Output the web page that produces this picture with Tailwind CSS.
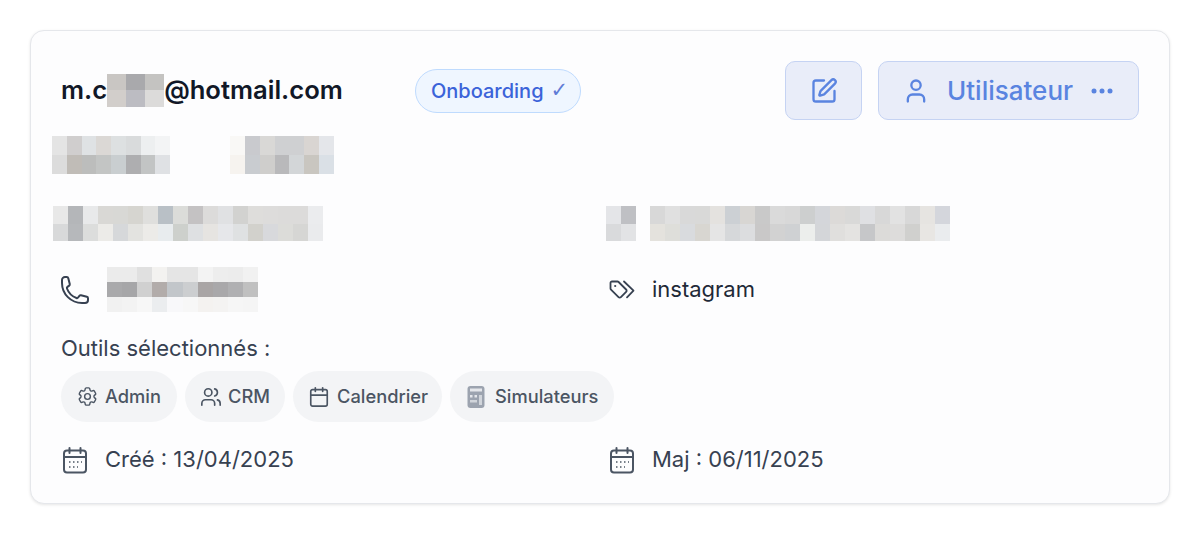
<!DOCTYPE html>
<html lang="en">
<head>
  <meta charset="UTF-8">
  <title>Fiche utilisateur</title>
  <meta name="viewport" content="width=device-width, initial-scale=1.0">
  <script src="https://cdn.jsdelivr.net/npm/@tailwindcss/browser@4"></script>
</head>
<body class="bg-white font-['Inter',sans-serif] p-[30px]">

  <div class="bg-[#fdfdfe] border border-[#e5e7eb] rounded-[14px] shadow-[0_1px_3px_rgba(0,0,0,0.1)] h-[474px] pt-[30px] px-[30px]">

    <!-- Header: email, status and actions -->
    <div class="flex items-center h-[59px]">
      <div class="flex items-center w-[354px] text-[25.6px] font-semibold text-[#111827]">
        <span>m.c</span>
        <div class="mosaic w-[57px] h-[33px]" data-cols="3" data-colors="c9c6c3 a9a9ac c4c3c1 d2cecb bcbcc2 dcdbda"></div>
        <span>@hotmail.com</span>
      </div>
      <span class="flex items-center gap-[7px] w-[166px] h-[44px] pl-[15px] rounded-full border border-[#bfdbfe] bg-[#eff6ff] text-[#3b63d9] text-[20px] font-medium">Onboarding <span class="font-['DejaVu_Sans',sans-serif] font-normal text-[#5f7cd6] text-[21px]">✓</span></span>
      <div class="ml-auto flex gap-4">
        <button class="flex items-center justify-center w-[77px] h-[59px] rounded-[10px] border border-[#c5d3f3] bg-[#e9edf9] text-[#5a84e0]">
          <svg class="w-[28px] h-[28px]" viewBox="0 0 24 24" fill="none" stroke="currentColor" stroke-width="2" stroke-linecap="round" stroke-linejoin="round"><path d="M12 3H5a2 2 0 0 0-2 2v14a2 2 0 0 0 2 2h14a2 2 0 0 0 2-2v-7"/><path d="M18.375 2.625a1 1 0 0 1 3 3l-9.013 9.014a2 2 0 0 1-.853.505l-2.873.84a.5.5 0 0 1-.62-.62l.84-2.873a2 2 0 0 1 .506-.852z"/></svg>
        </button>
        <button class="flex items-center w-[261px] h-[59px] pl-[23px] rounded-[10px] border border-[#c5d3f3] bg-[#e9edf9] text-[#5a84e0] text-[26px] font-medium">
          <svg class="w-[28px] h-[28px]" viewBox="0 0 24 24" fill="none" stroke="currentColor" stroke-width="2" stroke-linecap="round" stroke-linejoin="round"><path d="M19 21v-2a4 4 0 0 0-4-4H9a4 4 0 0 0-4 4v2"/><circle cx="12" cy="7" r="4"/></svg>
          <span class="ml-[17px]">Utilisateur</span>
          <svg class="w-[24px] h-[24px] ml-[17px]" viewBox="0 0 24 24" fill="currentColor"><circle cx="4" cy="12" r="2.500"/><circle cx="12" cy="12" r="2.500"/><circle cx="20" cy="12" r="2.500"/></svg>
        </button>
      </div>
    </div>

    <!-- Name -->
    <div class="flex mt-4 -ml-[9px]">
      <div class="mosaic w-[118px] h-[38px]" data-cols="8" data-colors="e4e4e4 d0cece dfe2e4 dbd8d5 dde0e1 d9dbdc edeff0 f3f4f5 dcdcdc c0bcb7 bcbdbc c3c5c4 c9ced0 aeaeb0 c2c4c4 dfe1e4"></div>
      <div class="mosaic w-[104px] h-[38px] ml-[60px]" data-cols="7" data-colors="f9f8f6 c9cace d9d8d6 cfd0d2 cfd0d2 d9d5d2 e4e6ea f6f3ef c9ccd0 cfcecc b9b9bb d3d6d8 c9c6c0 dae0e6"></div>
    </div>

    <!-- Contact details -->
    <div class="grid grid-cols-2 gap-x-4 mt-8">
      <div class="mosaic w-[270px] h-[35px] -ml-[8px]" data-cols="18" data-colors="e8e8e8 b4b6b9 e8e9ea d9d8d5 d8d8d5 d6d5d0 dfdfdd b9c0c6 dbdcd9 c4c2c3 dcdbda e0e1e3 d2d2d0 dedddb dddcdb dcdbda dcdbda ebecee d8d9da b6b8bb dcdddc ecebe8 d6d8da e3e3e0 ecebe8 e8ecee cdd0cc dee0e2 e6e4e1 e6e7ea dfe1e2 d2d1cc d8d9dc dcdcd9 d6d6d4 eaebed"></div>
      <div class="flex -ml-[2px]">
        <div class="mosaic w-[30px] h-[35px]" data-cols="2" data-colors="e4e5e8 bfc0c4 d9dadc e2e3e5"></div>
        <div class="mosaic w-[300px] h-[35px] ml-[14px]" data-cols="20" data-colors="d8d8d8 e0e0e0 d9d9d9 d9d9d8 e4e2df ccd0d4 d8d6d3 c9c9c9 dadada d8d8d8 cdcfcf d4d6da dcdad8 d9d9d8 dfe0e3 d8d8d8 e2e2e2 d8d8d8 e6e4e1 d4d6dc e4e2dd dededa d9dbde d8d6d1 e5e5e5 d6d8da dcdddf c9c8c8 d2d2d2 cfd1d3 eceeec d4d6d9 e0dfdd e4e3e1 c6c7c9 dcdbd9 dddcdb d0d0ce e8e6e3 eaecee"></div>
      </div>
    </div>

    <div class="grid grid-cols-2 gap-x-4 mt-[26px] h-[45px] text-[#1f2937] text-[22px]">
      <div class="flex items-center gap-4">
        <svg class="w-[28px] h-[28px] shrink-0" viewBox="1.500 1.500 21 21" fill="none" stroke="#374151" stroke-width="1.500" stroke-linecap="round" stroke-linejoin="round"><path d="M2.250 6.750c0 8.284 6.716 15 15 15h2.250a2.250 2.250 0 0 0 2.250-2.250v-1.372c0-.516-.351-.966-.852-1.091l-4.423-1.106c-.44-.11-.902.055-1.173.417l-.97 1.293c-.282.376-.769.542-1.21.38a12.035 12.035 0 0 1-7.143-7.143c-.162-.441.004-.928.38-1.21l1.293-.97c.363-.271.527-.734.417-1.173L6.963 3.102a1.125 1.125 0 0 0-1.091-.852H4.500A2.250 2.250 0 0 0 2.250 4.500v2.250Z"/></svg>
        <div class="mosaic w-[151px] h-[45px] ml-[2px]" data-cols="10" data-colors="ebebeb ebebeb e0e0e0 f3f2f0 e5e5e5 e5e5e5 f3f3f3 ededed ececec f1f1f1 a9a9ab a6a6a8 d0d0d0 b2acaa c2c6ca ccced0 a9a5a5 a9a8aa b0b0b2 c0c0c0 f1f1f1 f3f3f3 f7f7f7 ebedef f8f8fa f7f7f7 f4f2f0 f4f3f2 f6f6f6 f5f5f5"></div>
      </div>
      <div class="flex items-center gap-4">
        <svg class="w-[28px] h-[28px] shrink-0" viewBox="0 0 28 28" fill="none" stroke="#374151" stroke-width="1.800" stroke-linecap="round" stroke-linejoin="round"><path d="M2.500 7v5.500c0 .4.2.8.5 1.100l7.500 7.500c.7.7 1.700.7 2.400 0l5.200-5.200c.7-.7.7-1.700 0-2.400L10.600 6c-.3-.3-.7-.5-1.100-.5H4c-.8 0-1.500.7-1.500 1.500Z"/><path d="M16 5.500l9.500 9.200-6.500 6.600"/><circle cx="7.200" cy="10" r="1.100" fill="#374151" stroke="none"/></svg>
        <span>instagram</span>
      </div>
    </div>

    <!-- Selected tools -->
    <p class="mt-[22px] text-[22px] leading-[28px] text-[#374151]">Outils sélectionnés :</p>
    <div class="flex gap-2 mt-[9px] text-[18.300px] font-medium text-[#4b5563]">
      <span class="flex items-center gap-[6px] h-[51px] w-[116px] pl-[15px] rounded-full bg-[#f3f4f6]">
        <svg class="w-[23px] h-[23px]" viewBox="0 0 24 24" fill="none" stroke="currentColor" stroke-width="1.500" stroke-linecap="round" stroke-linejoin="round"><path d="M9.594 3.94c.09-.542.56-.94 1.11-.94h2.593c.55 0 1.02.398 1.11.94l.213 1.281c.063.374.313.686.645.87.074.04.147.083.22.127.325.196.72.257 1.075.124l1.217-.456a1.125 1.125 0 0 1 1.37.49l1.296 2.247a1.125 1.125 0 0 1-.26 1.431l-1.003.827c-.293.241-.438.613-.43.992a7.723 7.723 0 0 1 0 .255c-.008.378.137.75.43.991l1.004.827c.424.35.534.955.26 1.43l-1.298 2.247a1.125 1.125 0 0 1-1.369.491l-1.217-.456c-.355-.133-.75-.072-1.076.124a6.47 6.47 0 0 1-.22.128c-.331.183-.581.495-.644.869l-.213 1.281c-.09.543-.56.94-1.11.94h-2.594c-.55 0-1.019-.398-1.11-.94l-.213-1.281c-.062-.374-.312-.686-.644-.87a6.52 6.52 0 0 1-.22-.127c-.325-.196-.72-.257-1.076-.124l-1.217.456a1.125 1.125 0 0 1-1.369-.49l-1.297-2.247a1.125 1.125 0 0 1 .26-1.431l1.004-.827c.292-.24.437-.613.43-.991a6.932 6.932 0 0 1 0-.255c.007-.38-.138-.751-.43-.992l-1.004-.827a1.125 1.125 0 0 1-.26-1.43l1.297-2.247a1.125 1.125 0 0 1 1.37-.491l1.216.456c.356.133.751.072 1.076-.124.072-.044.146-.086.22-.128.332-.183.582-.495.644-.869l.214-1.28Z"/><circle cx="12" cy="12" r="3"/></svg>
        Admin
      </span>
      <span class="flex items-center gap-[6px] h-[51px] w-[100px] pl-[15px] rounded-full bg-[#f3f4f6]">
        <svg class="w-[22px] h-[22px]" viewBox="0 0 24 24" fill="none" stroke="currentColor" stroke-width="1.800" stroke-linecap="round" stroke-linejoin="round"><path d="M16 21v-2a4 4 0 0 0-4-4H6a4 4 0 0 0-4 4v2"/><path d="M16 3.128a4 4 0 0 1 0 7.744"/><path d="M22 21v-2a4 4 0 0 0-3-3.870"/><circle cx="9" cy="7" r="4"/></svg>
        CRM
      </span>
      <span class="flex items-center gap-[7px] h-[51px] w-[149px] pl-[15px] rounded-full bg-[#f3f4f6]">
        <svg class="w-[22px] h-[22px]" viewBox="0 0 24 24" fill="none" stroke="currentColor" stroke-width="1.800" stroke-linecap="round" stroke-linejoin="round"><path d="M8 2v4"/><path d="M16 2v4"/><rect x="3" y="4" width="18" height="18" rx="2"/><path d="M3 10h18"/></svg>
        Calendrier
      </span>
      <span class="flex items-center gap-[8px] h-[51px] w-[164px] pl-[15px] rounded-full bg-[#f3f4f6]">
        <svg class="w-[22px] h-[22px]" viewBox="0 0 22 22"><rect x="2.500" y="0" width="17" height="22" rx="3" fill="#9ca3af"/><rect x="5" y="2.500" width="12" height="3" fill="#e5e7eb"/><rect x="5" y="9" width="2.500" height="2.500" fill="#e5e7eb"/><rect x="9.500" y="9" width="2.500" height="2.500" fill="#e5e7eb"/><rect x="14" y="9" width="3" height="10" fill="#d1d5db"/><rect x="5" y="14" width="7" height="2.500" fill="#d1d5db"/></svg>
        Simulateurs
      </span>
    </div>

    <!-- Dates -->
    <div class="grid grid-cols-2 gap-x-4 mt-[21px] text-[22px] text-[#374151]">
      <div class="flex items-center gap-4">
        <svg class="w-[28px] h-[28px]" viewBox="0 0 28 28" fill="none" stroke="#4b5563" stroke-width="2" stroke-linecap="round" stroke-linejoin="round"><path d="M8.500 2v5M19.500 2v5"/><rect x="3" y="4.500" width="22" height="22" rx="3"/><path d="M3 11h22"/><path stroke-width="1.400" stroke-dasharray="1.500 2.500" stroke-linecap="butt" d="M8 16h13M8 21h9"/></svg>
        <span>Créé : 13/04/2025</span>
      </div>
      <div class="flex items-center gap-4">
        <svg class="w-[28px] h-[28px]" viewBox="0 0 28 28" fill="none" stroke="#4b5563" stroke-width="2" stroke-linecap="round" stroke-linejoin="round"><path d="M8.500 2v5M19.500 2v5"/><rect x="3" y="4.500" width="22" height="22" rx="3"/><path d="M3 11h22"/><path stroke-width="1.400" stroke-dasharray="1.500 2.500" stroke-linecap="butt" d="M8 16h13M8 21h9"/></svg>
        <span>Maj : 06/11/2025</span>
      </div>
    </div>
  </div>

  <script>
    // Blurred personal data: paint each block from its list of colours
    document.querySelectorAll(".mosaic").forEach(el => {
      const colors = el.dataset.colors.split(" ");
      el.style.display = "grid";
      el.style.gridTemplateColumns = `repeat(${el.dataset.cols}, 1fr)`;
      colors.forEach(c => {
        const cell = document.createElement("div");
        cell.style.background = "#" + c;
        el.appendChild(cell);
      });
    });
  </script>
</body>
</html>
